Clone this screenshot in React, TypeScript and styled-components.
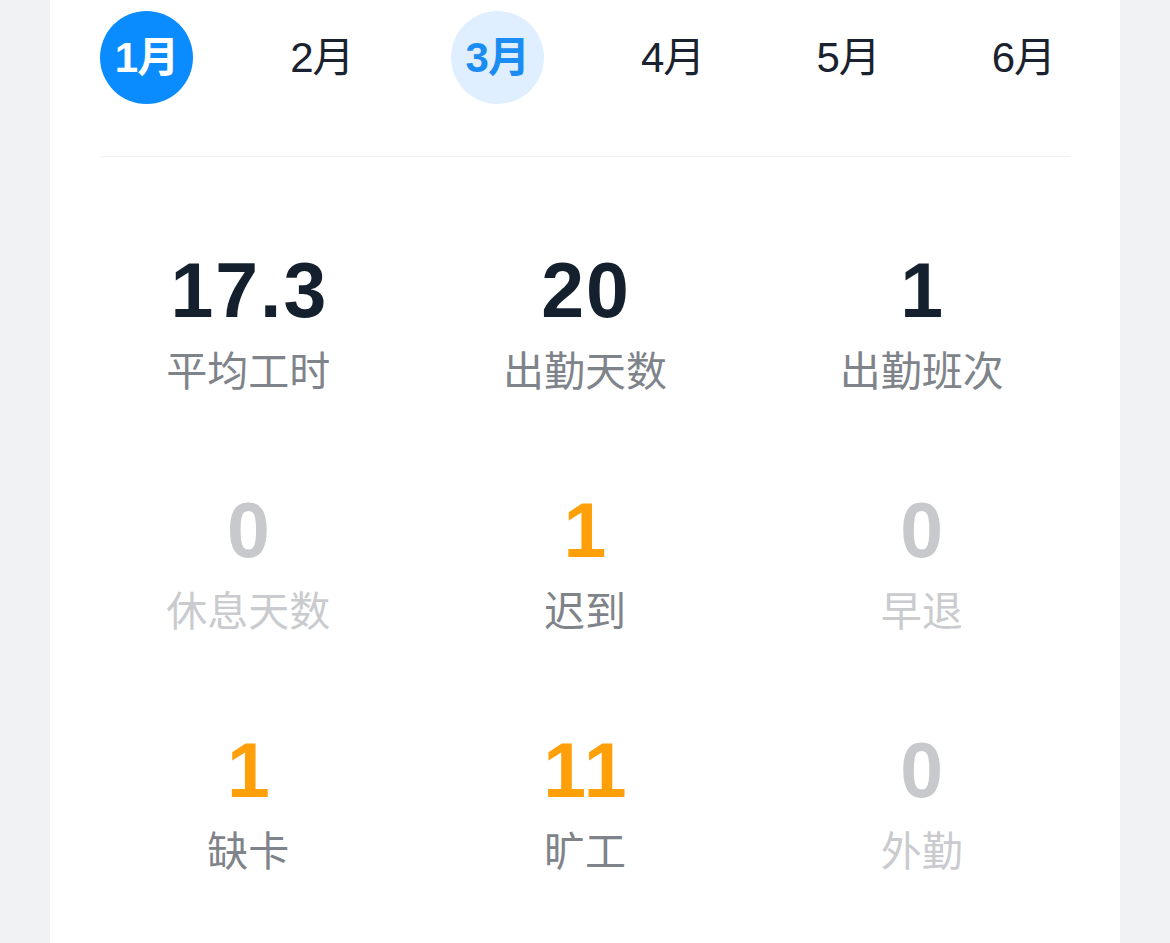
import React from "react";
import styled, { createGlobalStyle } from "styled-components";

const GlobalStyle = createGlobalStyle`
  html, body {
    margin: 0;
    padding: 0;
    background: #f1f2f4;
  }
  body {
    font-family: "Liberation Sans", "Noto Sans CJK SC", sans-serif;
  }
`;

const Page = styled.div`
  display: flex;
  justify-content: center;
  padding: 0 50px;
  min-height: 943px;
`;

const Card = styled.div`
  flex: 1;
  background: #ffffff;
  padding: 11px 50px 0;
  display: flex;
  flex-direction: column;
`;

const MonthRow = styled.div`
  display: flex;
  justify-content: space-between;
  align-items: center;
`;

type MonthState = "active" | "current" | "normal";

const Month = styled.div<{ $state: MonthState }>`
  width: 93px;
  height: 93px;
  border-radius: 50%;
  display: flex;
  align-items: center;
  justify-content: center;
  font-family: "Liberation Sans", "Noto Sans CJK SC", sans-serif;
  font-size: 42px;
  line-height: 1;
  font-weight: ${(p) => (p.$state === "normal" ? 400 : 700)};
  letter-spacing: -1px;
  background: ${(p) =>
    p.$state === "active" ? "#0a8cff" : p.$state === "current" ? "#e0efff" : "transparent"};
  color: ${(p) =>
    p.$state === "active" ? "#ffffff" : p.$state === "current" ? "#1b8cf2" : "#1a2230"};
`;

const Divider = styled.div`
  height: 1px;
  background: #eceef1;
  margin-top: 52px;
`;

const StatGrid = styled.div`
  display: grid;
  grid-template-columns: repeat(3, 1fr);
  row-gap: 103px;
  margin: 95px -20px 0;
`;

type Tone = "dark" | "warn" | "muted";

const Stat = styled.div`
  display: flex;
  flex-direction: column;
  align-items: center;
  gap: 17px;
`;

const StatValue = styled.div<{ $tone: Tone }>`
  font-family: "Liberation Sans", Arial, sans-serif;
  font-weight: 700;
  font-size: 77px;
  line-height: 1;
  height: 78px;
  letter-spacing: 2px;
  text-indent: 2px;
  color: ${(p) => (p.$tone === "dark" ? "#15202e" : p.$tone === "warn" ? "#ff9f0a" : "#c7c9cc")};
`;

const StatLabel = styled.div<{ $tone: Tone }>`
  font-family: "Noto Sans CJK SC", sans-serif;
  font-size: 41px;
  line-height: 42px;
  height: 42px;
  font-weight: 400;
  color: ${(p) => (p.$tone === "muted" ? "#c9cbce" : "#7f838a")};
`;

const months: { label: string; state: MonthState }[] = [
  { label: "1月", state: "active" },
  { label: "2月", state: "normal" },
  { label: "3月", state: "current" },
  { label: "4月", state: "normal" },
  { label: "5月", state: "normal" },
  { label: "6月", state: "normal" },
];

const stats: { value: string; label: string; tone: Tone }[] = [
  { value: "17.3", label: "平均工时", tone: "dark" },
  { value: "20", label: "出勤天数", tone: "dark" },
  { value: "1", label: "出勤班次", tone: "dark" },
  { value: "0", label: "休息天数", tone: "muted" },
  { value: "1", label: "迟到", tone: "warn" },
  { value: "0", label: "早退", tone: "muted" },
  { value: "1", label: "缺卡", tone: "warn" },
  { value: "11", label: "旷工", tone: "warn" },
  { value: "0", label: "外勤", tone: "muted" },
];

export default function App() {
  return (
    <>
      <GlobalStyle />
      <Page>
        <Card>
          <MonthRow>
            {months.map((m) => (
              <Month key={m.label} $state={m.state}>
                {m.label}
              </Month>
            ))}
          </MonthRow>
          <Divider />
          <StatGrid>
            {stats.map((s) => (
              <Stat key={s.label}>
                <StatValue $tone={s.tone}>{s.value}</StatValue>
                <StatLabel $tone={s.tone}>{s.label}</StatLabel>
              </Stat>
            ))}
          </StatGrid>
        </Card>
      </Page>
    </>
  );
}
